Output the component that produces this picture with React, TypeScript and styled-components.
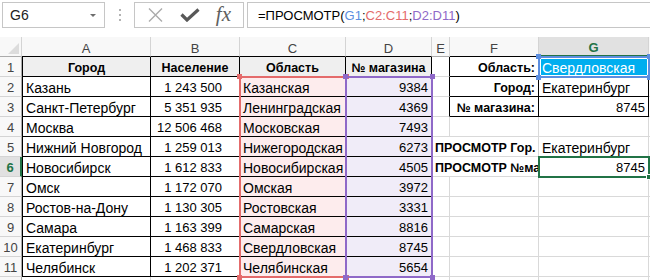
import styled, { createGlobalStyle } from "styled-components";

const GRID = "#d9d9d9";
const LINE = "#000";
const GREEN = "#217346";
const RED = "#e46b6b";
const PURPLE = "#8f69c8";
const BLUE = "#5b8ee0";

const GlobalStyle = createGlobalStyle`
  html, body {
    margin: 0;
    padding: 0;
    background: #fff;
  }
  body {
    font-family: "Liberation Sans", Arial, sans-serif;
    color: #000;
  }
`;

const Page = styled.div`
  width: 650px;
  height: 280px;
  overflow: hidden;
  display: flex;
  flex-direction: column;
`;

// ---------- formula bar ----------

const Toolbar = styled.div`
  display: flex;
  flex-shrink: 0;
  height: 26px;
  padding: 2px 0 9px 2px;
`;

const NameBox = styled.div`
  box-sizing: border-box;
  width: 103px;
  border: 1px solid #c6c6c6;
  display: flex;
  align-items: center;
  justify-content: space-between;
  padding: 0 8px 0 7px;
  font-size: 14px;
  color: #222;
`;

const DropArrow = styled.span`
  width: 0;
  height: 0;
  border-left: 3px solid transparent;
  border-right: 3px solid transparent;
  border-top: 3px solid #6d6d6d;
`;

const Grip = styled.div`
  width: 29px;
  display: flex;
  flex-direction: column;
  align-items: center;
  justify-content: center;
  gap: 3px;
  span {
    width: 2px;
    height: 2px;
    background: #b3b3b3;
  }
`;

const IconBox = styled.div`
  box-sizing: border-box;
  width: 110px;
  border: 1px solid #c6c6c6;
  display: flex;
  align-items: center;
  justify-content: space-around;
  padding: 0 4px;
`;

const Fx = styled.span`
  font-family: "Liberation Serif", "Times New Roman", serif;
  font-style: italic;
  font-size: 21px;
  color: #5f5f5f;
  line-height: 1;
  margin-top: -2px;
`;

const FormulaBox = styled.div`
  box-sizing: border-box;
  flex: 1;
  margin-left: 3px;
  margin-right: -4px;
  border: 1px solid #c6c6c6;
  display: flex;
  align-items: center;
  padding-left: 10px;
  font-size: 13px;
  white-space: nowrap;
`;

const Ref = styled.span<{ $color: string }>`
  color: ${({ $color }) => $color};
`;

// ---------- sheet ----------

const Sheet = styled.div`
  display: grid;
  grid-template-columns: 22px 129px 89px 106px 86px 18px 89px 110px 1fr;
  grid-template-rows: repeat(13, 20px);
`;

const Corner = styled.div`
  grid-row: 1;
  grid-column: 1;
  box-sizing: border-box;
  border-right: 1px solid #d4d4d4;
  border-bottom: 1px solid #ababab;
  background: #f8f8f8;
  display: flex;
  align-items: flex-end;
  justify-content: flex-end;
  padding: 0 2px 2px 0;
  &::after {
    content: "";
    width: 0;
    height: 0;
    border-left: 11px solid transparent;
    border-bottom: 11px solid #dcdcdc;
  }
`;

const ColHead = styled.div<{ $c: number; $active?: boolean; $edge?: string }>`
  grid-row: 1;
  grid-column: ${({ $c }) => $c};
  box-sizing: border-box;
  display: flex;
  align-items: center;
  justify-content: center;
  padding-top: 3px;
  font-size: 13px;
  border-right: 1px solid #d4d4d4;
  border-bottom: ${({ $active, $edge }) =>
    $active ? `2px solid ${GREEN}` : `1px solid ${$edge ?? "#ababab"}`};
  background: ${({ $active }) => ($active ? "#e1e1e1" : "#f8f8f8")};
  color: ${({ $active }) => ($active ? GREEN : "#444")};
  font-weight: ${({ $active }) => ($active ? 700 : 400)};
`;

const RowHead = styled.div<{ $r: number; $active?: boolean }>`
  grid-row: ${({ $r }) => $r};
  grid-column: 1;
  box-sizing: border-box;
  display: flex;
  align-items: center;
  justify-content: center;
  padding-top: 1px;
  font-size: 13px;
  border-bottom: 1px solid #d4d4d4;
  border-right: ${({ $active }) =>
    $active ? `2px solid ${GREEN}` : "1px solid #ababab"};
  background: ${({ $active }) => ($active ? "#e1e1e1" : "#f8f8f8")};
  color: ${({ $active }) => ($active ? GREEN : "#444")};
  font-weight: ${({ $active }) => ($active ? 700 : 400)};
`;

type Align = "left" | "right" | "center";

type CellProps = {
  $r: number;
  $c: number;
  $span?: number;
  $align?: Align;
  $bold?: boolean;
  $fill?: string;
  $color?: string;
  $size?: number;
  $pr?: number;
  $right?: string;
  $bottom?: string;
  $left?: string;
};

const justify = { left: "flex-start", right: "flex-end", center: "center" };

const Cell = styled.div<CellProps>`
  grid-row: ${({ $r }) => $r};
  grid-column: ${({ $c, $span }) => `${$c} / span ${$span ?? 1}`};
  box-sizing: border-box;
  min-width: 0;
  display: flex;
  align-items: center;
  justify-content: ${({ $align }) => justify[$align ?? "left"]};
  padding: 2px ${({ $pr }) => $pr ?? 3}px 0 3px;
  overflow: hidden;
  white-space: nowrap;
  border-right: 1px solid ${({ $right }) => $right ?? GRID};
  border-bottom: 1px solid ${({ $bottom }) => $bottom ?? GRID};
  border-left: ${({ $left }) => ($left ? `1px solid ${$left}` : "none")};
  background: ${({ $fill }) => $fill ?? "#fff"};
  color: ${({ $color }) => $color ?? "#000"};
  font-size: ${({ $size }) => $size ?? 14}px;
  font-weight: ${({ $bold }) => ($bold ? 700 : 400)};
`;

const RangeBox = styled.div<{
  $rows: string;
  $cols: string;
  $color: string;
  $inner?: boolean;
}>`
  grid-row: ${({ $rows }) => $rows};
  grid-column: ${({ $cols }) => $cols};
  position: relative;
  z-index: 2;
  pointer-events: none;
  margin: -1px;
  border: 2px solid ${({ $color }) => $color};
  box-shadow: ${({ $inner }) => ($inner ? "inset 0 0 0 1px #fff" : "none")};
`;

type Spot = "tl" | "tr" | "bl" | "br";

const Handle = styled.span<{ $at: Spot; $color: string }>`
  position: absolute;
  width: 5px;
  height: 5px;
  box-sizing: border-box;
  background: ${({ $color }) => $color};
  ${({ $at }) => ($at[0] === "t" ? "top: -4px;" : "bottom: -4px;")}
  ${({ $at }) => ($at[1] === "l" ? "left: -4px;" : "right: -4px;")}
`;

const FillHandle = styled.span`
  position: absolute;
  right: -4px;
  bottom: -4px;
  width: 6px;
  height: 6px;
  box-sizing: border-box;
  background: ${GREEN};
  border: 1px solid #fff;
`;

const Range = ({
  rows,
  cols,
  color,
  inner,
}: {
  rows: string;
  cols: string;
  color: string;
  inner?: boolean;
}) => (
  <RangeBox $rows={rows} $cols={cols} $color={color} $inner={inner}>
    {(["tl", "tr", "bl", "br"] as Spot[]).map((s) => (
      <Handle key={s} $at={s} $color={color} />
    ))}
  </RangeBox>
);

const cities: [string, string, string, string][] = [
  ["Казань", "1 243 500", "Казанская", "9384"],
  ["Санкт-Петербург", "5 351 935", "Ленинградская", "4369"],
  ["Москва", "12 506 468", "Московская", "7493"],
  ["Нижний Новгород", "1 259 013", "Нижегородская", "6273"],
  ["Новосибирск", "1 612 833", "Новосибирская", "4505"],
  ["Омск", "1 172 070", "Омская", "3972"],
  ["Ростов-на-Дону", "1 130 305", "Ростовская", "3331"],
  ["Самара", "1 163 399", "Самарская", "8816"],
  ["Екатеринбург", "1 468 833", "Свердловская", "8745"],
  ["Челябинск", "1 202 371", "Челябинская", "5654"],
];

const letters = ["A", "B", "C", "D", "E", "F", "G", ""];

type Spec = Omit<CellProps, "$r"> & { text?: string };

const rowCells = (row: number): Spec[] => {
  const out: Spec[] = [];
  const boxed = { $right: LINE, $bottom: LINE };

  // table A:D
  if (row === 1) {
    ["Город", "Население", "Область", "№ магазина"].forEach((t, i) =>
      out.push({
        $c: i + 2,
        text: t,
        $align: "center",
        $bold: true,
        $size: 12.5,
        $fill: "#efefef",
        $left: i === 0 ? LINE : undefined,
        ...boxed,
      })
    );
  } else if (row <= 11) {
    const [city, pop, region, shop] = cities[row - 2];
    out.push({ $c: 2, text: city, $left: LINE, ...boxed });
    out.push({ $c: 3, text: pop, $align: "right", $size: 13, $pr: 17, ...boxed });
    out.push({ $c: 4, text: region, $fill: "#fdeced", ...boxed });
    out.push({ $c: 5, text: shop, $align: "right", $size: 13, $fill: "#f0ecf8", ...boxed });
  } else {
    [2, 3, 4, 5].forEach((c) => out.push({ $c: c }));
  }

  // lookup block E:G
  if (row <= 3) {
    const labels = ["Область:", "Город:", "№ магазина:"];
    out.push({ $c: 6, $right: LINE });
    out.push({ $c: 7, text: labels[row - 1], $align: "right", $bold: true, $size: 12.5, ...boxed });
    if (row === 1)
      out.push({ $c: 8, text: "Свердловская", $fill: "#00aeef", $color: "#fff", ...boxed });
    if (row === 2) out.push({ $c: 8, text: "Екатеринбург", ...boxed });
    if (row === 3) out.push({ $c: 8, text: "8745", $align: "right", $size: 13, ...boxed });
  } else if (row === 5 || row === 6) {
    out.push({
      $c: 6,
      $span: 2,
      text: row === 5 ? "ПРОСМОТР Гор." : "ПРОСМОТР №магазина",
      $bold: true,
      $size: 12.5,
      $pr: 5,
    });
    out.push(
      row === 5
        ? { $c: 8, text: "Екатеринбург" }
        : { $c: 8, text: "8745", $align: "right", $size: 13 }
    );
  } else {
    [6, 7, 8].forEach((c) => out.push({ $c: c }));
  }

  out.push({ $c: 9 });
  return out;
};

const XIcon = () => (
  <svg width="17" height="16" viewBox="0 0 17 16">
    <path d="M2 1.5 L15 14.5 M15 1.5 L2 14.5" stroke="#ababab" strokeWidth="1.4" fill="none" />
  </svg>
);

const CheckIcon = () => (
  <svg width="20" height="14" viewBox="0 0 20 14">
    <path
      d="M1.5 6.5 L7 12 L18.5 1.5"
      stroke="#585858"
      strokeWidth="3.2"
      fill="none"
      strokeLinejoin="miter"
    />
  </svg>
);

export default function App() {
  return (
    <Page>
      <GlobalStyle />
      <Toolbar>
        <NameBox>
          G6
          <DropArrow />
        </NameBox>
        <Grip>
          <span />
          <span />
          <span />
        </Grip>
        <IconBox>
          <XIcon />
          <CheckIcon />
          <Fx>fx</Fx>
        </IconBox>
        <FormulaBox>
          =ПРОСМОТР(<Ref $color={BLUE}>G1</Ref>;<Ref $color={RED}>C2:C11</Ref>;
          <Ref $color={PURPLE}>D2:D11</Ref>)
        </FormulaBox>
      </Toolbar>

      <Sheet>
        <Corner />
        {letters.map((l, i) => (
          <ColHead
            key={i}
            $c={i + 2}
            $active={l === "G"}
            $edge={["A", "B", "C", "D", "F"].includes(l) ? LINE : undefined}
          >
            {l}
          </ColHead>
        ))}
        {Array.from({ length: 12 }, (_, i) => i + 1).map((row) => (
          <RowHead key={`h${row}`} $r={row + 1} $active={row === 6}>
            {row}
          </RowHead>
        ))}
        {Array.from({ length: 12 }, (_, i) => i + 1).flatMap((row) =>
          rowCells(row).map(({ text, ...p }) => (
            <Cell key={`${row}-${p.$c}`} $r={row + 1} {...p}>
              {text}
            </Cell>
          ))
        )}

        <Range rows="3 / 13" cols="4 / 5" color={RED} />
        <Range rows="3 / 13" cols="5 / 6" color={PURPLE} />
        <Range rows="2 / 3" cols="8 / 9" color={BLUE} inner />
        <RangeBox $rows="7 / 8" $cols="8 / 9" $color={GREEN}>
          <FillHandle />
        </RangeBox>
      </Sheet>
    </Page>
  );
}
